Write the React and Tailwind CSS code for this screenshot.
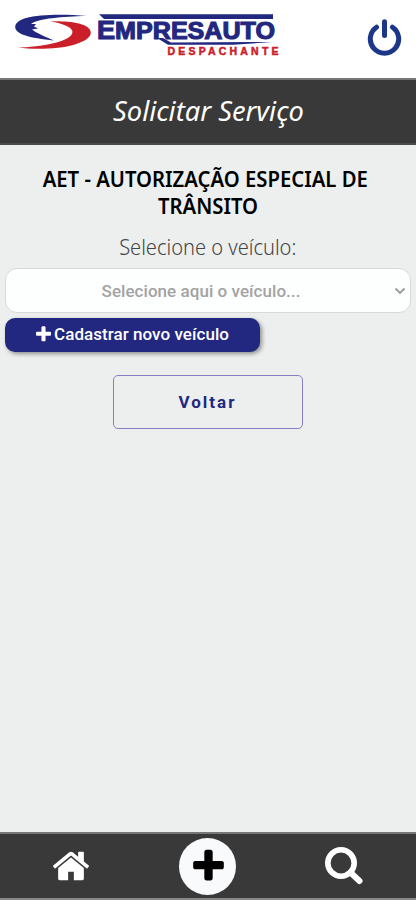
import React from 'react';

const HOME =
  'M1408 992v480q0 26-19 45t-45 19h-384v-384h-256v384h-384q-26 0-45-19t-19-45v-480q0-1 .5-3t.5-3l575-474 575 474q1 2 1 6zm223-69l-62 74q-8 9-21 11h-3q-13 0-21-7l-692-577-692 577q-12 8-24 7-13-2-21-11l-62-74q-8-10-7-23.5t11-21.5l719-599q32-26 76-26t76 26l244 204v-195q0-14 9-23t23-9h192q14 0 23 9t9 23v408l219 182q10 8 11 21.5t-7 23.5z';
const PLUS =
  'M1600 736v192q0 40-28 68t-68 28h-416v416q0 40-28 68t-68 28h-192q-40 0-68-28t-28-68v-416h-416q-40 0-68-28t-28-68v-192q0-40 28-68t68-28h416v-416q0-40 28-68t68-28h192q40 0 68 28t28 68v416h416q40 0 68 28t28 68z';

function Logo() {
  return (
    <svg width="270" height="50" viewBox="12 8 270 50" role="img" aria-label="Empresauto Despachante">
      <path
        d="M87 16C66 14 40 14 26 18C12 22 12 31 24 35C32 38 42 39 54 40.500C46 37 36 33 32 29.500L38 28.500L34 26.500L36 24L31 24C38 18.500 62 16.500 87 16Z"
        fill="#22277f"
      />
      <path
        d="M50 21.200C66 21 84 22 89.500 29C94 36 86 41 75 44.500C60 49 35 50 18 47.500C40 47 56 43.500 66 39C79 32 72 25 50 21.200Z"
        fill="#cb2029"
      />
      <path d="M99 14.300H273V19H104Z" fill="#22277f" />
      <text
        x="97"
        y="39"
        textLength="178"
        lengthAdjust="spacingAndGlyphs"
        fill="#22277f"
        stroke="#22277f"
        strokeWidth="1.100"
        className="font-['Liberation_Sans',sans-serif] text-[26px] font-bold"
      >
        E<tspan fontSize="24">MPRESAUTO</tspan>
      </text>
      <path d="M157 38H163L171 42.600L272 42L233 44.800H168Z" fill="#22277f" />
      <text
        x="167.500"
        y="55"
        textLength="111"
        lengthAdjust="spacing"
        fill="#cb2029"
        stroke="#cb2029"
        strokeWidth="0.500"
        className="font-['Liberation_Sans',sans-serif] text-[10.500px] font-bold"
      >
        DESPACHANTE
      </text>
    </svg>
  );
}

function PowerIcon() {
  return (
    <svg width="35" height="38" viewBox="0 0 35 38" fill="none" stroke="#1c3688" strokeWidth="5" strokeLinecap="round">
      <path d="M9.500 9.200A14.200 14.200 0 1 0 25.500 9.200" />
      <path d="M17.500 3.800V17.500" />
    </svg>
  );
}

function SearchIcon() {
  return (
    <svg width="40" height="40" viewBox="0 0 40 40" fill="none" stroke="#fff">
      <circle cx="17" cy="17" r="13.200" strokeWidth="5.600" />
      <path d="M26.500 26.500L35.500 35" strokeWidth="6" strokeLinecap="round" />
    </svg>
  );
}

export default function App() {
  return (
    <div className="flex h-[900px] w-[417px] flex-col overflow-hidden bg-white pr-px font-['Roboto',sans-serif]">
      <header className="flex h-[78px] shrink-0 justify-between pl-3 pr-[14px] pt-2">
        <Logo />
        <button className="mt-[10px] h-[38px]" aria-label="Sair">
          <PowerIcon />
        </button>
      </header>

      <div className="flex h-[67px] shrink-0 items-center justify-center border-y-2 border-t-[#777] border-b-[#4b4b4b] bg-[#393939]">
        <h1 className="origin-center scale-x-[1.010] whitespace-nowrap pb-0.5 font-['Noto_Sans',sans-serif] text-[27px] leading-9 text-white italic">
          Solicitar Serviço
        </h1>
      </div>

      <main className="flex flex-1 flex-col bg-[#edefef] px-[5px] text-center">
        <h2 className="mt-5 w-[380px] scale-x-[0.922] self-center font-['Noto_Sans',sans-serif] text-[22px] leading-[27px] font-semibold text-black">
          <span className="mr-1.5">AET - AUTORIZAÇÃO ESPECIAL DE</span> TRÂNSITO
        </h2>
        <label className="mt-[14px] flex h-[30px] items-center justify-center whitespace-nowrap font-['Noto_Sans',sans-serif] text-[21px] font-light text-[#444]">
          <span className="scale-x-[0.955]">Selecione o veículo:</span>
        </label>

        <div className="mt-[5px] flex h-[45px] items-center justify-end rounded-xl border border-[#d8dada] bg-[#fdfefe] pr-1 text-[#a3a3a3]">
          <span className="flex-1 pt-0.5 pl-0.5 text-[17px] font-medium tracking-[0.050px]">Selecione aqui o veículo...</span>
          <svg width="12" height="8" viewBox="0 0 12 8" fill="none" stroke="#999" strokeWidth="1.800">
            <path d="M1.500 1.500L6 6L10.500 1.500" />
          </svg>
        </div>

        <button className="mt-[5px] flex h-[34px] w-[255px] items-center justify-center rounded-[10px] bg-[#22277f] pr-0.5 pb-px text-[17px] font-medium text-white shadow-[2px_2px_4px_#0006]">
          <svg width="19" height="19" viewBox="0 0 1792 1792" fill="currentColor">
            <path d={PLUS} />
          </svg>
          <span className="ml-px tracking-[0.050px]">Cadastrar novo veículo</span>
        </button>

        <button className="mt-[23px] mr-px h-[54px] w-[190px] self-center rounded-[5px] border border-[#8580c4] pt-0.5 text-[17px] font-bold tracking-[2px] text-[#22277f]">
          Voltar
        </button>
      </main>

      <nav className="grid h-[68px] shrink-0 grid-cols-3 items-center border-y-2 border-t-[#777] border-b-[#888] bg-[#393939]">
        <button className="flex justify-center pl-1" aria-label="Início">
          <svg width="40" height="40" viewBox="-64 0 1792 1792" fill="#fff">
            <path d={HOME} />
          </svg>
        </button>
        <button className="flex size-[57px] items-center justify-center justify-self-center rounded-full bg-[#f8fafb] pl-0.5" aria-label="Novo serviço">
          <svg width="39" height="39" viewBox="0 0 1792 1792" fill="#000">
            <path d={PLUS} />
          </svg>
        </button>
        <button className="flex justify-center pr-[5px]" aria-label="Buscar">
          <SearchIcon />
        </button>
      </nav>
    </div>
  );
}
